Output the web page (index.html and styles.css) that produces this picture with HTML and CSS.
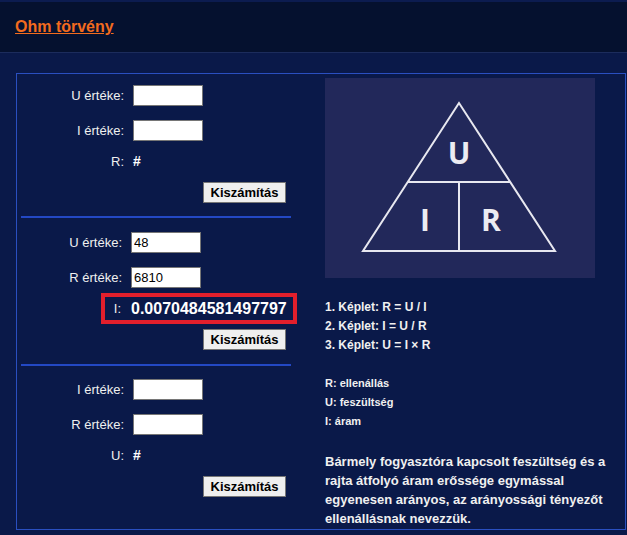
FILE: index.html
```html
<!DOCTYPE html>
<html>
<head>
<title>Ohm törvény</title>
<meta http-equiv="Content-Type" content="text/html;charset=utf-8" />
<link rel="stylesheet" href="styles.css">
</head>
<body>

<div class="topbar">
    <a href="#" class="title">Ohm törvény</a>
</div>

<div class="page">
<div class="panel">

    <div class="calcs">
        <form class="calc first">
            <label class="field"><span>U értéke:</span><input type="text"></label>
            <label class="field"><span>I értéke:</span><input type="text"></label>
            <div class="result"><span>R:</span><b>#</b></div>
            <div class="go"><button type="button">Kiszámítás</button></div>
        </form>
        <hr class="rule">
        <form class="calc second">
            <label class="field"><span>U értéke:</span><input type="text" value="48"></label>
            <label class="field"><span>R értéke:</span><input type="text" value="6810"></label>
            <div class="result hit"><span>I:</span><b>0.0070484581497797</b></div>
            <div class="go"><button type="button">Kiszámítás</button></div>
        </form>
        <hr class="rule">
        <form class="calc third">
            <label class="field"><span>I értéke:</span><input type="text"></label>
            <label class="field"><span>R értéke:</span><input type="text"></label>
            <div class="result"><span>U:</span><b>#</b></div>
            <div class="go"><button type="button">Kiszámítás</button></div>
        </form>
    </div>

    <div class="info">
        <svg class="triangle" width="270" height="200" viewBox="0 0 270 200">
            <rect width="270" height="200" fill="#22285a"/>
            <g stroke="#e8e8f0" stroke-width="2" fill="none">
                <polygon points="134,25 38,173 230,173"/>
                <line x1="83" y1="104" x2="185" y2="104"/>
                <line x1="134" y1="104" x2="134" y2="173"/>
            </g>
            <g fill="#ececf2" font-family="'Open Sans', sans-serif" font-weight="700" font-size="30" text-anchor="middle">
                <text x="134" y="86">U</text>
                <text x="100" y="153">I</text>
                <text x="166" y="153">R</text>
            </g>
        </svg>

        <p class="formulas">
            1. Képlet: R = U / I<br>
            2. Képlet: I = U / R<br>
            3. Képlet: U = I × R
        </p>

        <p class="legend">
            R: ellenállás<br>
            U: feszültség<br>
            I: áram
        </p>

        <p class="law">Bármely fogyasztóra kapcsolt feszültség és a rajta átfolyó áram erőssége egymással egyenesen arányos, az arányossági tényezőt ellenállásnak nevezzük.</p>
    </div>

</div>
</div>

</body>
</html>
```

FILE: styles.css
```css
body {
    margin: 0;
    background: #0a1949;
    color: #f0f0f0;
    font-family: "Liberation Sans", Arial, sans-serif;
    font-size: 13px;
}

.topbar {
    height: 50px;
    border-top: 2px solid #0c1c50;
    border-bottom: 1px solid #1c2c5c;
    background: #05112f;
    display: flex;
    align-items: center;
    padding-left: 15px;
}
.title {
    color: #f36b1e;
    font-weight: bold;
    font-size: 16px;
}

.page {
    padding: 20px 0 0 16px;
}
.panel {
    width: 608px;
    border: 1px solid #2a4fc0;
    display: flex;
    gap: 30px;
}

/* left column: the three calculators */
.calcs {
    width: 278px;
}
.calc {
    --lab: 107px;
    display: flex;
    flex-direction: column;
}
.calc.first { padding: 11px 0 13px; }
.calc.second { padding: 14px 0 14px; --lab: 105px; }
.calc.third { padding: 13px 0 32px; }

.rule {
    margin: 0 4px;
    border: 0;
    height: 2px;
    background: #2348c4;
}

.field, .result {
    display: grid;
    grid-template-columns: var(--lab) 70px;
    column-gap: 9px;
    align-items: center;
}
.field span, .result span {
    text-align: right;
}
.field + .field {
    margin-top: 14px;
}
.field input {
    box-sizing: border-box;
    width: 70px;
    height: 21px;
    margin: 0;
    border: 1px solid #767676;
    padding: 1px 2px;
    font-family: "Liberation Sans", Arial, sans-serif;
    font-size: 13px;
    color: #000;
    background: #fff;
}
.result {
    height: 16px;
    margin-top: 12px;
}
.result b {
    font-size: 14px;
    color: #fff;
}

.result.hit {
    box-sizing: border-box;
    height: 31px;
    width: 196px;
    margin: 5px 0 0 84px;
    border: 4px solid #e21f2c;
    grid-template-columns: 16px auto;
    column-gap: 10px;
}
.result.hit b {
    font-size: 16px;
}

.go {
    margin-top: 13px;
    padding-left: 186px;
}
.hit + .go {
    margin-top: 5px;
}
.go button {
    width: 83px;
    height: 21px;
    padding: 0;
    border: 1px solid #767676;
    background: #efefef;
    color: #000;
    font-family: "Liberation Sans", Arial, sans-serif;
    font-size: 13px;
    font-weight: bold;
}

/* right column: formula picture and text */
.info {
    width: 285px;
    padding-top: 4px;
    font-weight: bold;
}
.triangle {
    display: block;
}
.formulas {
    margin: 20px 0 0;
    font-size: 12px;
    line-height: 19px;
}
.legend {
    margin: 19px 0 0;
    font-size: 11px;
    line-height: 19px;
}
.law {
    margin: 21px 0 0;
    font-size: 13px;
    line-height: 19px;
}
```
